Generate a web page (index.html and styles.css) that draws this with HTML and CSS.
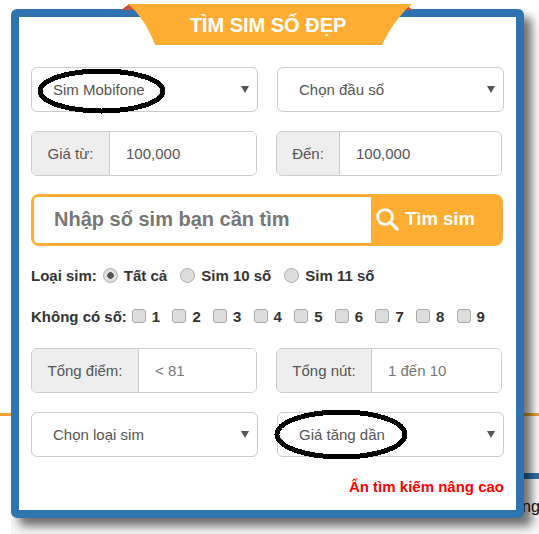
FILE: index.html
```html
<!DOCTYPE html>
<html lang="vi">
<head>
<meta charset="utf-8">
<title>Tìm sim số đẹp</title>
<link rel="stylesheet" href="styles.css">
</head>
<body>
<div class="backdrop" aria-hidden="true">
  <div class="line-orange"></div>
  <div class="line-blue"></div>
  <div class="back-text">ng</div>
  <div class="band"></div>
</div>
<main class="panel">
  <div class="ribbon-tip"></div>
  <div class="ribbon-tip tip-right"></div>
  <svg class="ribbon" width="284" height="41" viewBox="0 0 284 41"><path d="M0 0H284C274 8 262 24 254 41H27C21 24 11 9 0 0Z" fill="#ffad33"/></svg>
  <h1 class="title">TÌM SIM SỐ ĐẸP</h1>

  <div class="row row-select">
    <div class="select-wrap">
      <select class="field-select"><option>Sim Mobifone</option></select>
      <svg class="oval oval-one" width="129" height="46" viewBox="0 0 129 46"><ellipse cx="64.5" cy="23" rx="61.5" ry="20"/></svg>
    </div>
    <div class="select-wrap">
      <select class="field-select"><option>Chọn đầu số</option></select>
    </div>
  </div>

  <div class="row row-input gap-19">
    <div class="group"><span class="addon addon-gia">Giá từ:</span><input class="field-input" value="100,000"></div>
    <div class="group"><span class="addon addon-den">Đến:</span><input class="field-input" value="100,000"></div>
  </div>

  <form class="search">
    <input class="search-input" placeholder="Nhập số sim bạn cần tìm">
    <button class="search-btn" type="button">
      <svg width="24" height="24" viewBox="0 0 24 24" fill="none" stroke="#fff" stroke-linecap="round"><circle cx="10" cy="10" r="7.4" stroke-width="2.8"/><path d="M15.6 15.6L22 22" stroke-width="3.2"/></svg>
      <span>Tìm sim</span>
    </button>
  </form>

  <div class="opts opts-radio">
    <span class="opt-label">Loại sim:</span>
    <label class="opt r1"><input type="radio" name="loai" checked><span>Tất cả</span></label>
    <label class="opt r2"><input type="radio" name="loai"><span>Sim 10 số</span></label>
    <label class="opt r3"><input type="radio" name="loai"><span>Sim 11 số</span></label>
  </div>

  <div class="opts opts-check">
    <span class="opt-label">Không có số:</span>
    <div class="checks">
      <label class="opt"><input type="checkbox"><span>1</span></label>
      <label class="opt"><input type="checkbox"><span>2</span></label>
      <label class="opt"><input type="checkbox"><span>3</span></label>
      <label class="opt"><input type="checkbox"><span>4</span></label>
      <label class="opt"><input type="checkbox"><span>5</span></label>
      <label class="opt"><input type="checkbox"><span>6</span></label>
      <label class="opt"><input type="checkbox"><span>7</span></label>
      <label class="opt"><input type="checkbox"><span>8</span></label>
      <label class="opt"><input type="checkbox"><span>9</span></label>
    </div>
  </div>

  <div class="row row-input">
    <div class="group"><span class="addon addon-diem">Tổng điểm:</span><input class="field-input light" value="&lt; 81"></div>
    <div class="group"><span class="addon addon-nut">Tổng nút:</span><input class="field-input light" value="1 đến 10"></div>
  </div>

  <div class="row row-select gap-19">
    <div class="select-wrap">
      <select class="field-select"><option>Chọn loại sim</option></select>
    </div>
    <div class="select-wrap">
      <select class="field-select"><option>Giá tăng dần</option></select>
      <svg class="oval oval-two" width="134" height="51" viewBox="0 0 134 51"><ellipse cx="67" cy="25.5" rx="64" ry="22.5"/></svg>
    </div>
  </div>

  <div class="toggle"><a class="toggle-link" href="#">Ẩn tìm kiếm nâng cao</a></div>
</main>
</body>
</html>
```
FILE: styles.css
```css
* { box-sizing: border-box; }

html, body { margin: 0; padding: 0; }

body {
  width: 539px;
  height: 534px;
  overflow: hidden;
  position: relative;
  background: #fff;
  font-family: "Liberation Sans", Arial, sans-serif;
  color: #333;
  padding: 9px 0 0 11px;
}

.backdrop { position: absolute; inset: 0; }
.line-orange { position: absolute; left: 0; right: 0; top: 413px; height: 3px; background: #f0a530; }
.line-blue { position: absolute; left: 500px; right: 0; top: 473px; height: 6px; background: #2f74b1; }
.back-text { position: absolute; left: 522px; top: 497px; font-size: 16px; line-height: 20px; color: #111; }
.band { position: absolute; left: 11px; right: 0; top: 518px; bottom: 0; background: #f5f5f5; }

.panel {
  position: relative;
  width: 513px;
  height: 509px;
  background: #fff;
  border: 8px solid #2f74b1;
  border-radius: 6px;
  padding: 50px 12px 0;
  box-shadow: 8px 8px 10px rgba(0, 0, 0, .55);
}

.ribbon { position: absolute; left: 109px; top: -13px; }
.ribbon-tip {
  position: absolute;
  left: 102px;
  top: -13px;
  width: 14px;
  height: 6px;
  background: #c9503a;
  clip-path: polygon(60% 0, 100% 100%, 0 100%);
}
.tip-right { left: 380px; clip-path: polygon(40% 0, 100% 100%, 0 100%); }

.title {
  position: absolute;
  left: 107px;
  top: -11px;
  width: 284px;
  margin: 0;
  text-align: center;
  font-size: 20px;
  line-height: 39px;
  font-weight: 700;
  color: #fff;
}

.row { display: grid; gap: 19px; }
.row-select { grid-template-columns: 227px 227px; }
.row-input { grid-template-columns: 226px 226px; }
.gap-19 { margin-top: 19px; }

.select-wrap { position: relative; height: 45px; }

.field-select {
  display: block;
  width: 100%;
  height: 45px;
  padding: 0 30px 0 21px;
  border: 1px solid #ccc;
  border-radius: 6px;
  background: #fff;
  font: 15px/20px "Liberation Sans", Arial, sans-serif;
  color: #555;
  appearance: none;
}

.select-wrap::after {
  content: "";
  position: absolute;
  right: 9px;
  top: 19px;
  width: 0;
  height: 0;
  border-left: 4px solid transparent;
  border-right: 4px solid transparent;
  border-top: 7px solid #555;
  pointer-events: none;
}

.oval { position: absolute; pointer-events: none; shape-rendering: crispEdges; }
.oval ellipse { fill: none; stroke: #000; stroke-width: 5; }
.oval-one { left: 6px; top: 1px; }
.oval-two { left: -3px; top: -3px; }

.group {
  display: flex;
  height: 45px;
  border: 1px solid #ccc;
  border-radius: 6px;
  overflow: hidden;
  background: #fff;
}

.addon {
  flex: none;
  display: flex;
  align-items: center;
  justify-content: center;
  background: #eee;
  border-right: 1px solid #ccc;
  font-size: 15px;
  color: #555;
}
.addon-gia { width: 78px; }
.addon-den { width: 63px; }
.addon-diem { width: 107px; }
.addon-nut { width: 95px; }

.field-input {
  flex: 1;
  min-width: 0;
  border: 0;
  outline: 0;
  padding: 0 16px;
  background: #fff;
  font: 15px "Liberation Sans", Arial, sans-serif;
  color: #555;
}
.field-input.light { color: #777; }

.search {
  display: flex;
  width: 472px;
  height: 52px;
  margin-top: 18px;
  border: 3px solid #ffad33;
  border-radius: 8px;
  background: #ffad33;
}

.search-input {
  flex: none;
  width: 337px;
  border: 0;
  outline: 0;
  padding: 0 20px 2px;
  background: #fff;
  border-radius: 4px 0 0 4px;
  font: 700 20px "Liberation Sans", Arial, sans-serif;
  color: #777;
}
.search-input::placeholder { color: #777; opacity: 1; }

.search-btn {
  flex: 1;
  display: flex;
  align-items: center;
  gap: 6px;
  padding: 0 0 2px 4px;
  border: 0;
  background: #ffad33;
  color: #fff;
  font: 700 18.5px "Liberation Sans", Arial, sans-serif;
}

.opts { display: flex; align-items: center; font-size: 15px; font-weight: 700; color: #333; }
.opts-radio { height: 20px; margin-top: 19px; }
.opts-check { height: 20px; margin-top: 21px; margin-bottom: 22px; }

.opt { display: flex; align-items: center; }
.opt input {
  appearance: none;
  flex: none;
  margin: 0;
  width: 15px;
  height: 15px;
  border: 1px solid #aaa;
  background: #ddd;
}
.opt input[type="radio"] { border-radius: 50%; }
.opt input[type="radio"]:checked {
  background: radial-gradient(circle, #555 0 3px, #e0e0e0 3.6px);
}
.opt input[type="checkbox"] { border-radius: 3px; width: 14px; height: 14px; }

.r1 { margin-left: 6px; gap: 6px; }
.r2 { margin-left: 13px; gap: 6px; }
.r3 { margin-left: 13px; gap: 6px; }

.checks { display: flex; margin-left: 5px; }
.checks .opt { width: 40.6px; gap: 6px; }

.toggle { margin-top: 21px; text-align: right; line-height: 18px; }
.toggle-link { font-size: 15px; font-weight: 700; color: #f00; text-decoration: none; }
```
